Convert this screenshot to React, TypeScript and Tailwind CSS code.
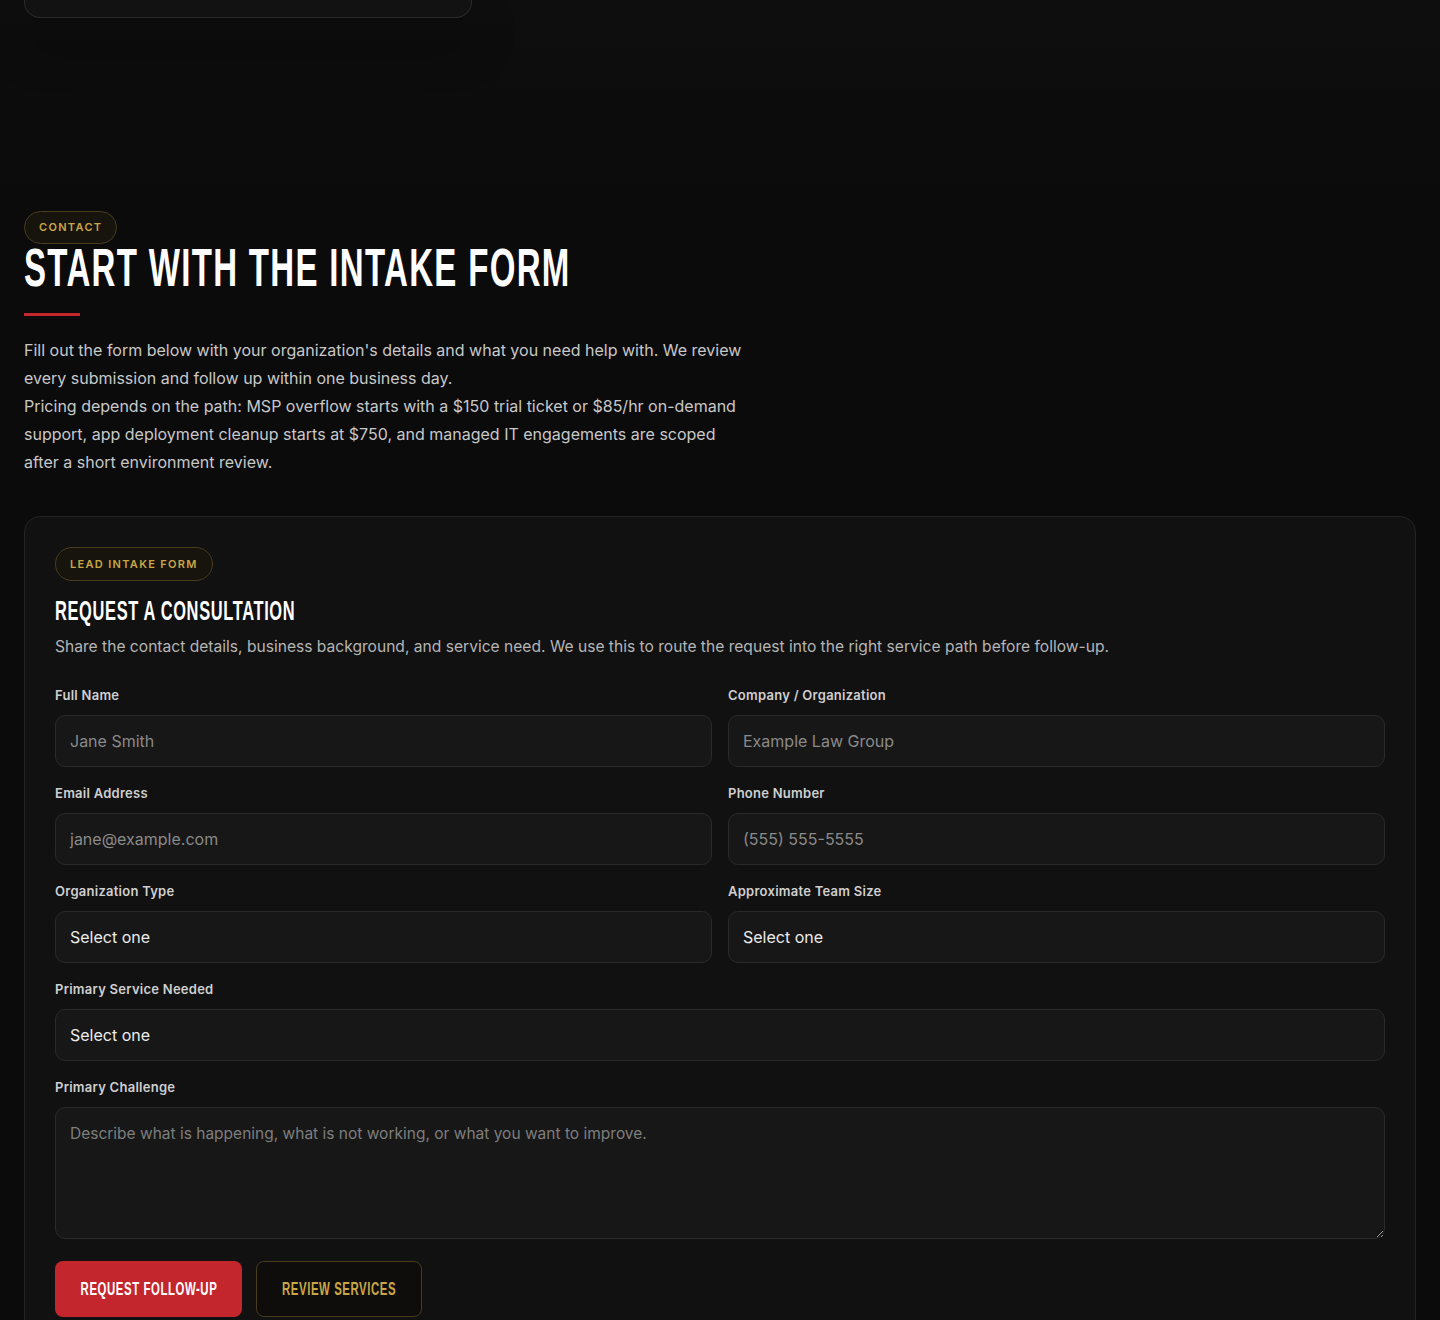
const body = { fontFamily: "Inter, 'Noto Sans', sans-serif" };
const display = { fontFamily: "'Liberation Sans', Arial, sans-serif" };

const Field = ({ label, placeholder, select }: { label: string; placeholder?: string; select?: boolean }) => (
  <div className="flex flex-col">
    <label className="mb-2.5 text-[13px] leading-5 font-semibold tracking-[0.02em] text-[#cfcfcf]">{label}</label>
    <div
      className={`flex h-[52px] items-center rounded-[10px] border border-[#2a2a2a] bg-[#171717] px-[14px] text-[16px] ${
        select ? "text-[#ececec]" : "text-[#8a8a8a]"
      }`}
    >
      {select ? "Select one" : placeholder}
    </div>
  </div>
);

const App = () => {
  return (
    <div className="min-h-[1320px] w-full bg-[#0b0b0b] px-6" style={body}>
      <div className="-mx-6 bg-gradient-to-b from-[#0e0e0e] to-[#0b0b0b] px-6 pb-[193px]">
        <div className="h-[18px] w-[448px] rounded-b-2xl border-x border-b border-[#2a2a2a] bg-[#121212] shadow-[0_24px_48px_rgba(0,0,0,0.45)]" />
      </div>

      <span className="inline-flex h-[33px] items-center rounded-full border border-[#4a3d1e] bg-[#17140d] px-[14px] text-[11px] font-semibold tracking-[0.12em] text-[#c9a646]">
        CONTACT
      </span>
      <h1
        className="text-[53px] leading-[48px] font-bold tracking-[0.04em] whitespace-nowrap text-white uppercase"
        style={display}
      >
        <span className="inline-block origin-left scale-x-[0.623]">Start with the intake form</span>
      </h1>
      <div className="mt-[21px] h-[3px] w-14 bg-[#c4262e]" />
      <div className="mt-[20px] max-w-[724px] text-[16px] leading-7 text-[#c8c8c8]">
        <p>
          Fill out the form below with your organization's details and what you need help with. We review every
          submission and follow up within one business day.
        </p>
        <p>
          Pricing depends on the path: MSP overflow starts with a $150 trial ticket or $85/hr on-demand support, app
          deployment cleanup starts at $750, and managed IT engagements are scoped after a short environment review.
        </p>
      </div>

      <div className="mt-[40px] rounded-2xl border border-[#242424] bg-[#111111] px-[30px] pt-[30px] pb-[30px]">
        <span className="inline-flex h-[34px] items-center rounded-full border border-[#4a3d1e] bg-[#17140d] px-[14px] text-[11px] font-semibold tracking-[0.12em] text-[#c9a646]">
          LEAD INTAKE FORM
        </span>
        <h2
          className="mt-[13px] text-[28.5px] leading-8 font-bold tracking-[0.04em] whitespace-nowrap text-white uppercase"
          style={display}
        >
          <span className="inline-block origin-left scale-x-[0.576]">Request a consultation</span>
        </h2>
        <p className="mt-[9px] text-[15.6px] leading-6 text-[#b5b5b5]">
          Share the contact details, business background, and service need. We use this to route the request into the
          right service path before follow-up.
        </p>

        <div className="mt-[26px] grid grid-cols-2 gap-x-4 gap-y-4">
          <Field label="Full Name" placeholder="Jane Smith" />
          <Field label="Company / Organization" placeholder="Example Law Group" />
          <Field label="Email Address" placeholder="jane@example.com" />
          <Field label="Phone Number" placeholder="(555) 555-5555" />
          <Field label="Organization Type" select />
          <Field label="Approximate Team Size" select />
          <div className="col-span-2">
            <Field label="Primary Service Needed" select />
          </div>
          <div className="col-span-2 flex flex-col">
            <label className="mb-2.5 text-[13px] leading-5 font-semibold tracking-[0.02em] text-[#cfcfcf]">
              Primary Challenge
            </label>
            <textarea
              readOnly
              placeholder="Describe what is happening, what is not working, or what you want to improve."
              className="h-[132px] rounded-[10px] border border-[#2a2a2a] bg-[#171717] px-[14px] py-[14px] text-[15.5px] text-[#ececec] outline-none placeholder:text-[#7e7e7e]"
            />
          </div>
        </div>

        <div className="mt-[22px] flex gap-[14px]">
          <button
            className="flex h-14 w-[187px] items-center justify-center rounded-lg bg-[#c4262e] text-[19px] font-bold tracking-[0.05em] whitespace-nowrap text-white uppercase"
            style={display}
          >
            <span className="inline-block scale-x-[0.6]">Request Follow-up</span>
          </button>
          <button
            className="flex h-14 w-[166px] items-center justify-center rounded-lg border border-[#4a3d1e] bg-[#0e0d0b] text-[19px] font-bold tracking-[0.05em] whitespace-nowrap text-[#c9a646] uppercase"
            style={display}
          >
            <span className="inline-block scale-x-[0.6]">Review Services</span>
          </button>
        </div>
      </div>
    </div>
  );
};

export default App;
